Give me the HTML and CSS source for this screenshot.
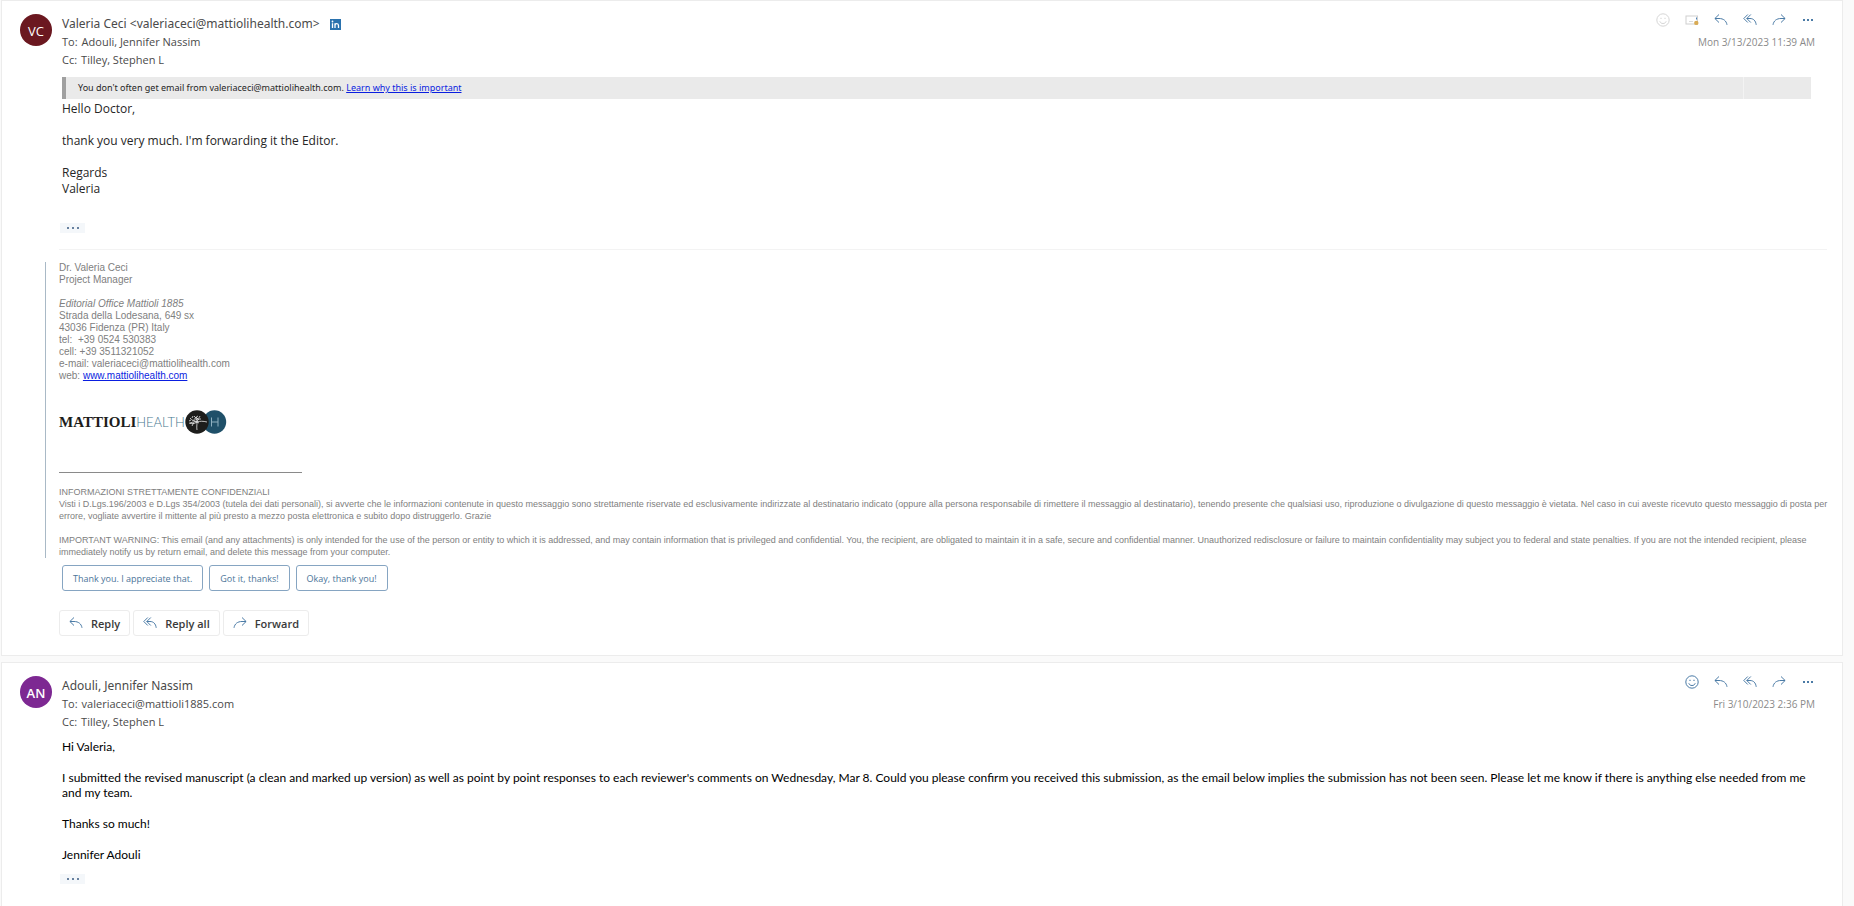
FILE: index.html
```
<!DOCTYPE html>
<html lang="en">
<head>
    <meta charset="UTF-8">
    <meta name="viewport" content="width=device-width, initial-scale=1.0">
    <title>Mail conversation</title>
    <link rel="stylesheet" href="styles.css">
</head>
<body>
<!-- shared icons -->
<svg class="sprite" aria-hidden="true">
    <symbol id="icon-smile" viewBox="0 0 14 14">
        <circle cx="7" cy="7" r="6.200"/>
        <path d="M3.800 8.300c.6 1.600 1.800 2.200 3.200 2.200s2.600-.6 3.200-2.200"/>
        <path d="M4.300 5.300h1.400M8.300 5.300h1.400"/>
    </symbol>
    <symbol id="icon-reply" viewBox="0 0 14 14">
        <path d="M5 1.500.9 5.500 5 9.500M.9 5.500H5c4.500 0 7.300 2.300 8 6.300"/>
    </symbol>
    <symbol id="icon-reply-all" viewBox="0 0 14 14">
        <path d="M4.800 1.500.8 5.500l4 4M7.800 1.500l-4 4 4 4M3.800 5.500H7c3.500 0 5.700 2.300 6.200 6.300"/>
    </symbol>
    <symbol id="icon-forward" viewBox="0 0 14 14">
        <path d="M9 1.500l4.100 4L9 9.500M13.100 5.500H9c-4.500 0-7.300 2.300-8 6.300"/>
    </symbol>
    <symbol id="icon-more" viewBox="0 0 14 14">
        <path d="M3 6v2M7 6v2M11 6v2" stroke-width="2"/>
    </symbol>
</svg>

<main class="thread">
    <article class="message">
        <header class="message-header">
            <div class="avatar avatar-vc">VC</div>
            <div class="people">
                <h2 class="sender">Valeria Ceci &lt;valeriaceci@mattiolihealth.com&gt;
                    <svg class="linkedin" viewBox="0 0 11 11" role="img" aria-label="LinkedIn">
                        <rect width="11" height="11" fill="#2a72ae"/>
                        <path d="M2.500 4.300V9M5 9V4.300M5 6.500c0-2.500 3.500-2.500 3.500 0V9" fill="none" stroke="#fff" stroke-width="1.300"/>
                        <circle cx="2.500" cy="2.500" r=".9" fill="#fff"/>
                    </svg>
                </h2>
                <p class="recipient"><span>To:</span>Adouli, Jennifer Nassim</p>
                <p class="recipient"><span>Cc:</span>Tilley, Stephen L</p>
            </div>
            <div class="side">
                <div class="actions">
                    <button type="button" class="faded" aria-label="React"><svg><use href="#icon-smile"/></svg></button>
                    <button type="button" class="faded" aria-label="Certificate">
                        <svg viewBox="0 0 14 14">
                            <rect x="1" y="3" width="11.500" height="8" stroke="#cfcfcf"/>
                            <path d="M4 8.500h4" stroke="#dcdcdc"/>
                            <path d="M11.500 4.500v2" stroke="#4b80b4"/>
                            <circle cx="11.300" cy="9.900" r="2.200" fill="#d9ab55" stroke="none"/>
                        </svg>
                    </button>
                    <button type="button" aria-label="Reply"><svg><use href="#icon-reply"/></svg></button>
                    <button type="button" aria-label="Reply all"><svg><use href="#icon-reply-all"/></svg></button>
                    <button type="button" aria-label="Forward"><svg><use href="#icon-forward"/></svg></button>
                    <button type="button" aria-label="More actions"><svg><use href="#icon-more"/></svg></button>
                </div>
                <time class="date">Mon 3/13/2023 11:39 AM</time>
            </div>
        </header>

        <div class="notice">
            <p>You don't often get email from valeriaceci@mattiolihealth.com. <a href="#">Learn why this is important</a></p>
            <span class="notice-end"></span>
        </div>

        <div class="body">
            <p>Hello Doctor,</p>
            <p>thank you very much. I'm forwarding it the Editor.</p>
            <p>Regards<br>Valeria</p>
        </div>
        <button type="button" class="expand expand-gap" aria-label="Show trimmed content"><i></i><i></i><i></i></button>

        <hr class="divider">

        <section class="quote">
            <address class="signature">
                Dr. Valeria Ceci<br>
                Project Manager<br>
                <br>
                <em>Editorial Office Mattioli 1885</em><br>
                Strada della Lodesana, 649 sx<br>
                43036 Fidenza (PR) Italy<br>
                tel: &nbsp;+39 0524 530383<br>
                cell: +39 3511321052<br>
                e-mail: valeriaceci@mattiolihealth.com<br>
                web: <a href="#">www.mattiolihealth.com</a>
            </address>
            <div class="logo">
                <span class="logo-name">MATTIOLI</span>
                <span class="logo-health">HEALTH</span>
                <svg class="logo-mark" viewBox="0 0 42 24" aria-hidden="true">
                    <circle cx="29.500" cy="12" r="11.700" fill="#1f5069"/>
                    <circle cx="12" cy="12" r="11.700" fill="#1d1d1b"/>
                    <path d="M26.500 7.500v9M33 7.500v9M26.500 12H33" stroke="#8fb0c0" fill="none"/>
                    <g stroke="#e8e8e8" stroke-width=".8" fill="none">
                        <path d="M12 20c-.5-3 0-5 0-8M12 12C9 12 7 10 5 8M12 12c-3 2-5 2-8 1M12 12c0-3-1-4-3-6M12 12c1-3 2-4 3-6M12 12c3-1 6-1 10 0"/>
                        <path d="M6 10l-2 1M7 8l1-2M10 8l3-2M14 9h2M9 12l-2 4M5 13l3-1M9 9h4M8 10l6 3M11 7l3 3"/>
                    </g>
                </svg>
            </div>
            <hr class="rule">
            <p class="legal">INFORMAZIONI STRETTAMENTE CONFIDENZIALI<br>
                Visti i D.Lgs.196/2003 e D.Lgs 354/2003 (tutela dei dati personali), si avverte che le informazioni contenute in questo messaggio sono strettamente riservate ed esclusivamente indirizzate al destinatario indicato (oppure alla persona responsabile di rimettere il messaggio al destinatario), tenendo presente che qualsiasi uso, riproduzione o divulgazione di questo messaggio è vietata. Nel caso in cui aveste ricevuto questo messaggio di posta per errore, vogliate avvertire il mittente al più presto a mezzo posta elettronica e subito dopo distruggerlo. Grazie</p>
            <p class="legal">IMPORTANT WARNING: This email (and any attachments) is only intended for the use of the person or entity to which it is addressed, and may contain information that is privileged and confidential. You, the recipient, are obligated to maintain it in a safe, secure and confidential manner. Unauthorized redisclosure or failure to maintain confidentiality may subject you to federal and state penalties. If you are not the intended recipient, please immediately notify us by return email, and delete this message from your computer.</p>
        </section>

        <div class="suggestions">
            <button type="button">Thank you. I appreciate that.</button>
            <button type="button">Got it, thanks!</button>
            <button type="button">Okay, thank you!</button>
        </div>
        <div class="replies">
            <button type="button"><svg><use href="#icon-reply"/></svg>Reply</button>
            <button type="button"><svg><use href="#icon-reply-all"/></svg>Reply all</button>
            <button type="button"><svg><use href="#icon-forward"/></svg>Forward</button>
        </div>
    </article>

    <article class="message">
        <header class="message-header">
            <div class="avatar avatar-an">AN</div>
            <div class="people">
                <h2 class="sender">Adouli, Jennifer Nassim</h2>
                <p class="recipient"><span>To:</span>valeriaceci@mattioli1885.com</p>
                <p class="recipient"><span>Cc:</span>Tilley, Stephen L</p>
            </div>
            <div class="side">
                <div class="actions">
                    <button type="button" aria-label="React"><svg><use href="#icon-smile"/></svg></button>
                    <button type="button" aria-label="Reply"><svg><use href="#icon-reply"/></svg></button>
                    <button type="button" aria-label="Reply all"><svg><use href="#icon-reply-all"/></svg></button>
                    <button type="button" aria-label="Forward"><svg><use href="#icon-forward"/></svg></button>
                    <button type="button" aria-label="More actions"><svg><use href="#icon-more"/></svg></button>
                </div>
                <time class="date">Fri 3/10/2023 2:36 PM</time>
            </div>
        </header>

        <div class="body body-plain">
            <p>Hi Valeria,</p>
            <p>I submitted the revised manuscript (a clean and marked up version) as well as point by point responses to each reviewer's comments on Wednesday, Mar 8. Could you please confirm you received this submission, as the email below implies the submission has not been seen. Please let me know if there is anything else needed from me and my team.</p>
            <p>Thanks so much!</p>
            <p>Jennifer Adouli</p>
        </div>
        <button type="button" class="expand" aria-label="Show trimmed content"><i></i><i></i><i></i></button>
    </article>
</main>
</body>
</html>
```
FILE: styles.css
```
* {
    box-sizing: border-box;
}

body {
    margin: 0;
    background-color: #fafafa;
    font-family: "Open Sans", "Noto Sans", sans-serif;
    font-size: 12px;
    color: #262626;
}

h2,
p {
    margin: 0;
    font-weight: normal;
}

button {
    margin: 0;
    padding: 0;
    border: none;
    background: none;
    font-family: inherit;
    cursor: pointer;
}

a {
    color: #0a1ee0;
}

.sprite {
    display: none;
}

.thread {
    display: flex;
    flex-direction: column;
    gap: 6px;
    min-height: 100vh;
    padding: 0 11px 0 1px;
}

.message {
    padding: 13px 27px 19px 18px;
    border: 1px solid #ececec;
    background: #fff;
}

.message:last-child {
    flex: 1;
    border-bottom: none;
}

/* header */
.message-header {
    display: flex;
    gap: 10px;
}

.avatar {
    width: 32px;
    height: 32px;
    border-radius: 50%;
    color: #fff;
    font-size: 13px;
    line-height: 34px;
    text-align: center;
}

.avatar-vc {
    background: #6b1820;
}

.avatar-an {
    background: #7d2892;
    font-weight: 600;
}

.people {
    flex: 1;
    padding-top: 1px;
    color: #4a4a4a;
}

.sender {
    display: flex;
    align-items: center;
    gap: 10px;
    font-family: "Noto Sans", sans-serif;
    font-size: 12px;
    line-height: 18px;
}

.linkedin {
    width: 11px;
    height: 11px;
}

.recipient {
    font-size: 11px;
    line-height: 18px;
}

.recipient span {
    margin-right: 4px;
}

.actions {
    display: flex;
    gap: 15px;
}

.actions button {
    height: 14px;
}

.side {
    display: flex;
    flex-direction: column;
    align-items: flex-end;
    gap: 7px;
    margin-top: -1px;
}

.actions svg,
.replies svg {
    display: block;
    width: 14px;
    height: 14px;
    fill: none;
    stroke: #4b7ba6;
}

.actions .faded svg {
    stroke: #d6d6d6;
}

.date {
    color: #8a8a8a;
    font-size: 10px;
    line-height: 16px;
}

/* message text */
.notice {
    display: flex;
    justify-content: space-between;
    margin: 8px 4px 2px 42px;
    border-left: 4px solid #a0a0a0;
    background: #eaeaea;
    font-family: "Noto Sans", sans-serif;
    font-size: 9px;
    line-height: 22px;
}

.notice p {
    padding-left: 12px;
}

.notice-end {
    width: 68px;
    border-left: 1px solid #f3f3f3;
}

.body {
    display: flex;
    flex-direction: column;
    gap: 16px;
    margin-left: 42px;
    line-height: 16px;
}

.body-plain {
    margin-top: 8px;
    color: #000;
    font-family: Lato, sans-serif;
    line-height: 15px;
}

.expand {
    display: flex;
    justify-content: center;
    align-items: center;
    gap: 3px;
    width: 25px;
    height: 10px;
    margin: 12px 0 0 40px;
    background: #f4f7fa;
}

.expand i {
    width: 2px;
    height: 2px;
    border-radius: 50%;
    background: #3a5a80;
}

.expand-gap {
    margin-top: 26px;
}

.divider {
    margin: 16px -12px 12px 39px;
    border: none;
    border-top: 1px solid #f3f3f3;
}

/* quoted signature */
.quote {
    margin: 0 -16px 0 25px;
    padding-left: 13px;
    border-left: 1px solid #a9b9c6;
    color: #808080;
    font-family: "Liberation Sans", Arial, sans-serif;
}

.signature {
    font-size: 10px;
    font-style: normal;
    line-height: 12px;
}

.logo {
    display: flex;
    align-items: center;
    height: 24px;
    margin-top: 28px;
}

.logo-name {
    color: #1d1d1b;
    font-family: "Liberation Serif", serif;
    font-size: 15px;
    font-weight: bold;
}

.logo-health {
    color: #47788f;
    font-family: Lato, sans-serif;
    font-size: 13px;
    font-weight: 300;
}

.logo-mark {
    width: 42px;
    height: 24px;
}

.rule {
    width: 243px;
    margin: 38px 0 13px;
    border: none;
    border-top: 1px solid #8a8a8a;
}

.legal {
    font-size: 9px;
    line-height: 12px;
}

.legal + .legal {
    margin-top: 12px;
}

/* reply buttons */
.suggestions {
    display: flex;
    gap: 6px;
    margin: 7px 0 0 42px;
}

.suggestions button {
    height: 26px;
    padding: 0 10px;
    border: 1px solid #86a5c2;
    border-radius: 3px;
    color: #4b7599;
    font-size: 9px;
}

.replies {
    display: flex;
    gap: 3px;
    margin: 19px 0 0 39px;
}

.replies button {
    display: flex;
    align-items: center;
    gap: 8px;
    height: 26px;
    padding: 0 9px;
    border: 1px solid #ececec;
    border-radius: 3px;
    color: #3a3a3a;
    font-size: 11px;
    font-weight: 600;
}
```
